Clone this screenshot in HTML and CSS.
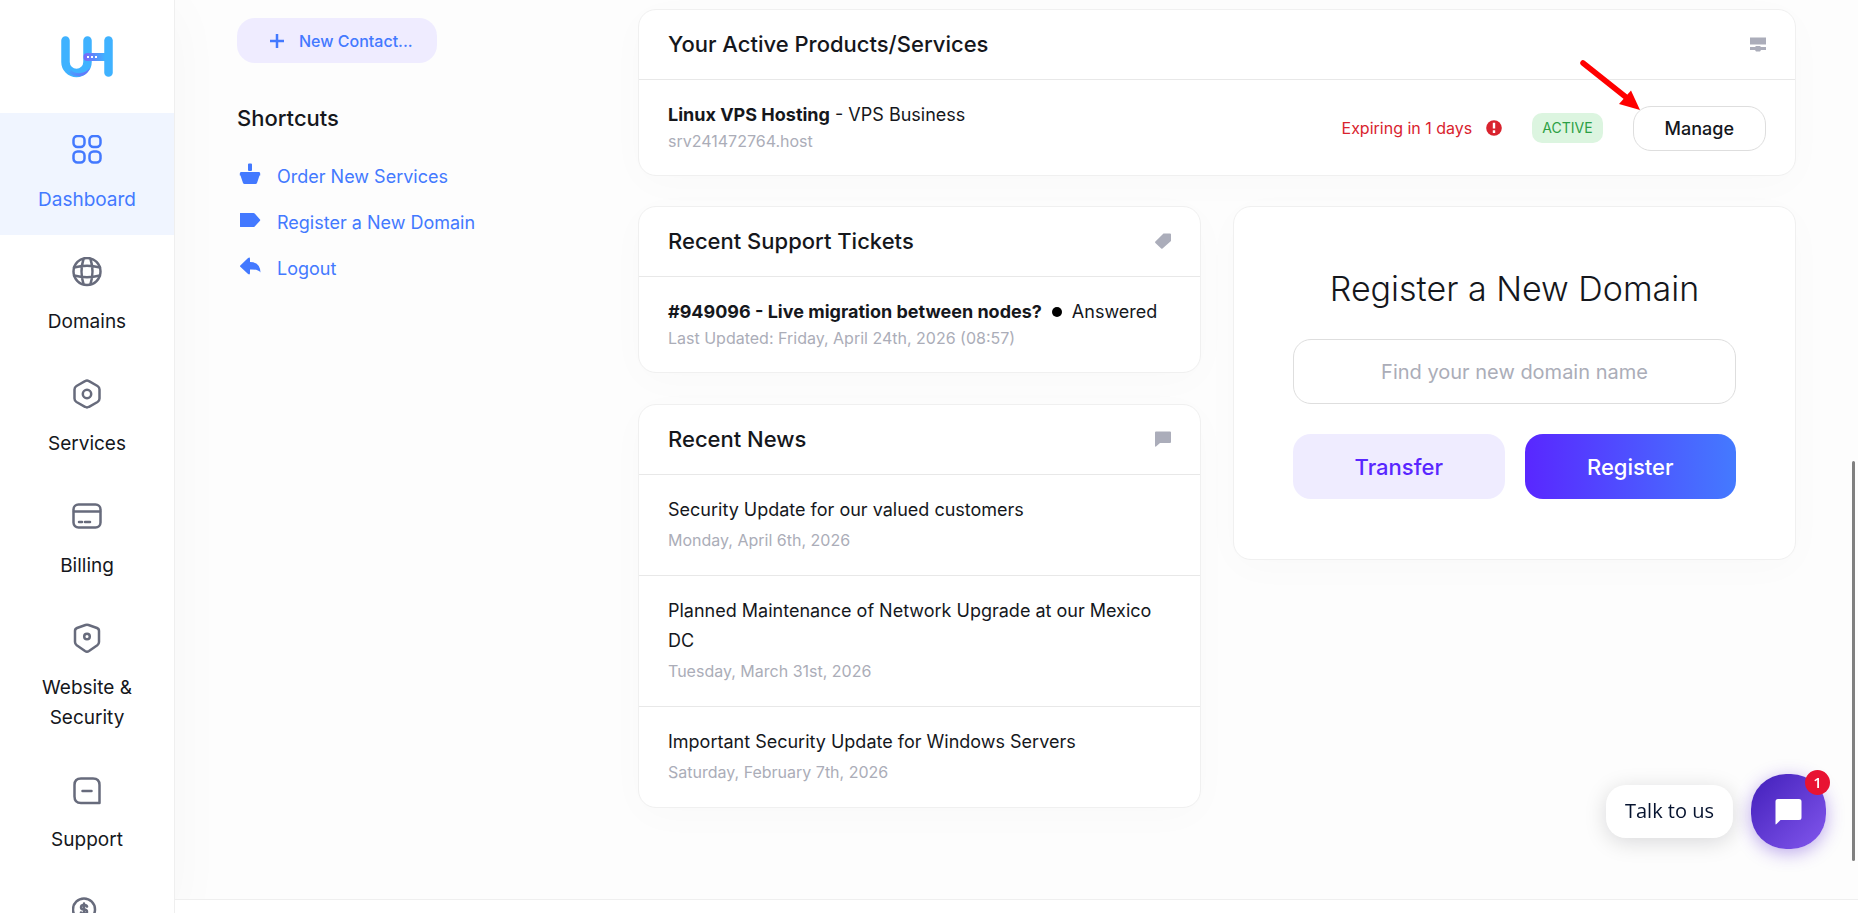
FILE: index.html
```html
<!DOCTYPE html>
<html lang="en">
<head>
    <meta charset="UTF-8">
    <meta name="viewport" content="width=device-width, initial-scale=1.0">
    <link rel="stylesheet" href="styles.css">
    <title>Dashboard</title>
</head>
<body>
    <div class="page">
        <nav class="sidebar">
            <a href="#" class="logo" aria-label="Home">
                <svg width="52" height="42" viewBox="0 0 52 42" fill="none" stroke-linecap="round">
                    <defs>
                        <linearGradient id="logoBar" x1="22" y1="0" x2="44" y2="0" gradientUnits="userSpaceOnUse">
                            <stop offset="0" stop-color="#7b61f8"/>
                            <stop offset="1" stop-color="#3fb2ff"/>
                        </linearGradient>
                        <linearGradient id="logoCurve" x1="6" y1="30" x2="27" y2="40" gradientUnits="userSpaceOnUse">
                            <stop offset="0" stop-color="#3fb2ff"/>
                            <stop offset="1" stop-color="#6b6bfa"/>
                        </linearGradient>
                    </defs>
                    <path d="M4.500 4.500V26A11 11 0 0 0 26.500 26V4.500" stroke="#3fb2ff" stroke-width="8.500"/>
                    <path d="M8 37C15 42 25 42 29 32C24 38 15 39 10 34Z" fill="url(#logoCurve)"/>
                    <path d="M47.500 4.500V36.500" stroke="#3fb2ff" stroke-width="8.500"/>
                    <path d="M26.500 21H45" stroke="url(#logoBar)" stroke-width="8"/>
                    <path d="M26 20h2v2h-2zM30 20h2v2h-2zM34 20h2v2h-2z" fill="#fff"/>
                </svg>
            </a>
            <a href="#" class="menu-link active">
                <svg class="menu-icon" viewBox="0 0 30 30">
                    <rect x="1.500" y="1" width="11" height="11" rx="4"/>
                    <rect x="17.500" y="1" width="11" height="11" rx="4"/>
                    <rect x="1.500" y="16.500" width="11" height="11" rx="4"/>
                    <rect x="17.500" y="16.500" width="11" height="11" rx="4"/>
                </svg>
                <span>Dashboard</span>
            </a>
            <a href="#" class="menu-link">
                <svg class="menu-icon" viewBox="0 0 30 30">
                    <circle cx="15" cy="14.500" r="13.500"/>
                    <path d="M11.500 2Q7.500 14.500 11.500 27M18.500 2Q22.500 14.500 18.500 27M2 10.500Q15 7 28 10.500M2 18.500Q15 22 28 18.500"/>
                </svg>
                <span>Domains</span>
            </a>
            <a href="#" class="menu-link">
                <svg class="menu-icon" viewBox="0 0 30 30">
                    <path d="M13 2.200Q15 1 17 2.200L25.500 7Q27.500 8.200 27.500 10.500V19.500Q27.500 21.800 25.500 23L17 27.800Q15 29 13 27.800L4.500 23Q2.500 21.800 2.500 19.500V10.500Q2.500 8.200 4.500 7Z"/>
                    <circle cx="15" cy="15" r="4.200"/>
                </svg>
                <span>Services</span>
            </a>
            <a href="#" class="menu-link">
                <svg class="menu-icon" viewBox="0 0 30 30">
                    <rect x="1.500" y="3.500" width="27" height="23" rx="5"/>
                    <path d="M2 10.500H28M7 21h3M13 21h5"/>
                </svg>
                <span>Billing</span>
            </a>
            <a href="#" class="menu-link">
                <svg class="menu-icon" viewBox="0 0 30 30">
                    <path d="M13.500 2Q15 1.500 16.500 2L25 5Q27 5.800 27 8V19Q27 21 25.300 22.300L17 28Q15 29.300 13 28L4.700 22.300Q3 21 3 19V8Q3 5.800 5 5Z"/>
                    <circle cx="15" cy="13.500" r="2.800"/>
                </svg>
                <span>Website &amp; Security</span>
            </a>
            <a href="#" class="menu-link">
                <svg class="menu-icon" viewBox="0 0 30 30">
                    <path d="M9 3.500H21Q27.500 3.500 27.500 10V28H9Q2.500 28 2.500 21.500V10Q2.500 3.500 9 3.500ZM10.500 16H19.500"/>
                </svg>
                <span>Support</span>
            </a>
            <a href="#" class="menu-link" aria-label="Affiliates">
                <svg class="menu-icon" viewBox="0 0 30 30">
                    <circle cx="12" cy="12.500" r="11"/>
                    <path d="M15 9.500Q14.500 8 12 8Q9 8 9 10.200Q9 12.500 12 12.500Q15 12.500 15 14.800Q15 17 12 17Q9.500 17 9 15.500M12 6.500V18.500M18 27Q26 26 27 18"/>
                </svg>
            </a>
        </nav>

        <main class="main">
            <div class="content">
                <aside class="side-panel">
                    <button class="new-contact">
                        <svg width="16" height="16" viewBox="0 0 16 16" fill="none" stroke="currentColor" stroke-width="2.500"><path d="M8 1V15M1 8H15"/></svg>
                        New Contact...
                    </button>
                    <h2 class="shortcuts-title">Shortcuts</h2>
                    <ul class="shortcuts">
                        <li><a href="#">
                            <svg width="24" height="24" viewBox="0 0 24 24" fill="currentColor"><path d="M10 2.500q0-1 1-1h2q1 0 1 1v5.500q0 1-1 1h-2q-1 0-1-1zM3 10h18q1.200 0 1.200 1.500v2h-.7L19 21q-.4 1-1.500 1h-11q-1 0-1.500-1L2.500 13.500h-.7v-2q0-1.500 1.200-1.500z"/></svg>
                            Order New Services
                        </a></li>
                        <li><a href="#">
                            <svg width="24" height="24" viewBox="0 0 24 24" fill="currentColor"><path d="M2 5h13.500q.7 0 1.200.5L22 11.500q.5.600 0 1.200L16.700 18.400q-.5.600-1.200.6H2.600q-.6 0-.6-.6z"/></svg>
                            Register a New Domain
                        </a></li>
                        <li><a href="#">
                            <svg width="24" height="24" viewBox="0 0 24 24" fill="currentColor"><path d="M2.300 11.500L9.800 4.300Q12 2.500 12 5V8Q22 8 22.500 18.500Q20 15 12 15.500V19Q12 21.500 9.800 19.800L2.300 12.800Q1.700 12.200 2.300 11.500z"/></svg>
                            Logout
                        </a></li>
                    </ul>
                </aside>

                <div class="cards">
                    <section class="card card-wide">
                        <header class="card-header">
                            <h3>Your Active Products/Services</h3>
                            <svg width="16" height="16" viewBox="0 0 16 16" fill="currentColor"><path d="M0 1.500h16v7H0zM0 11h5l1-1h4l1 1h5v3h-5l-1 1.500H6l-1-1.500H0z"/></svg>
                        </header>
                        <div class="product">
                            <div class="product-name">
                                <div><strong>Linux VPS Hosting</strong> - VPS Business</div>
                                <div class="muted">srv241472764.host</div>
                            </div>
                            <span class="expiring">Expiring in 1 days
                                <svg width="16" height="16" viewBox="0 0 16 16"><circle cx="8" cy="8" r="7.800" fill="#d9232e"/><path d="M6.800 2.800h2.400v5.700H6.800zM6.800 10.300h2.400v2.700H6.800z" fill="#fff"/></svg>
                            </span>
                            <span class="badge">ACTIVE</span>
                            <button class="manage">Manage</button>
                            <svg class="arrow" width="64" height="54" viewBox="0 0 64 54"><path d="M6 6L50 41" stroke="#f00" stroke-width="5.500" stroke-linecap="round"/><path d="M54 33.500L63 53L42 47z" fill="#f00"/></svg>
                        </div>
                    </section>

                    <div class="card-column">
                        <section class="card">
                            <header class="card-header">
                                <h3>Recent Support Tickets</h3>
                                <svg width="16" height="16" viewBox="0 0 16 16" fill="currentColor"><path d="M8.500.5H15q1 0 1 1V8L7.500 15.500q-.7.500-1.300 0L.4 10q-.7-.7 0-1.400z"/></svg>
                            </header>
                            <div class="ticket">
                                <div class="ticket-title"><strong>#949096 - Live migration between nodes?</strong> <i class="dot"></i> Answered</div>
                                <div class="muted">Last Updated: Friday, April 24th, 2026 (08:57)</div>
                            </div>
                        </section>

                        <section class="card">
                            <header class="card-header">
                                <h3>Recent News</h3>
                                <svg width="16" height="16" viewBox="0 0 16 16" fill="currentColor"><path d="M1 .5h14q1 0 1 1v9.500q0 1-1 1H5L1 15.500q-1 .5-1-.8V1.500q0-1 1-1z"/></svg>
                            </header>
                            <div class="news">
                                <a href="#">Security Update for our valued customers</a>
                                <div class="muted">Monday, April 6th, 2026</div>
                            </div>
                            <div class="news">
                                <a href="#">Planned Maintenance of Network Upgrade at our Mexico DC</a>
                                <div class="muted">Tuesday, March 31st, 2026</div>
                            </div>
                            <div class="news">
                                <a href="#">Important Security Update for Windows Servers</a>
                                <div class="muted">Saturday, February 7th, 2026</div>
                            </div>
                        </section>
                    </div>

                    <form class="card domain">
                        <h2><label for="domainName">Register a New Domain</label></h2>
                        <input id="domainName" type="text" placeholder="Find your new domain name">
                        <div class="domain-buttons">
                            <button type="button" class="transfer">Transfer</button>
                            <button type="button" class="register">Register</button>
                        </div>
                    </form>
                </div>
            </div>
            <footer class="footer"></footer>
        </main>
    </div>

    <!-- chat widget stays on top of the page -->
    <div class="chat">
        <span class="chat-label">Talk to us</span>
        <button class="chat-button" aria-label="Open chat">
            <svg width="27" height="26" viewBox="0 0 27 26" fill="#fff"><path d="M3 0h21q2.500 0 2.500 2.500v16q0 2.500-2.500 2.500H5.500L1.500 25Q.5 26 .5 24.500V2.500Q.5 0 3 0z"/></svg>
            <span class="chat-count">1</span>
        </button>
    </div>
    <div class="scroll-thumb"></div>
</body>
</html>
```
FILE: styles.css
```css
* {
    box-sizing: border-box;
}
body {
    margin: 0;
    background-color: #fdfdfd;
    color: #15171c;
    font-family: Inter, sans-serif;
    font-size: 18px;
    line-height: 30px;
}
h2, h3, ul {
    margin: 0;
    padding: 0;
}
h2, h3 {
    font-weight: 500;
}
a {
    color: inherit;
    text-decoration: none;
}
button, input {
    font-family: inherit;
    font-weight: 500;
    border: none;
    border-radius: 18px;
}
svg {
    display: block;
    flex-shrink: 0;
}
strong {
    font-weight: 700;
}
.page {
    display: flex;
    height: 100vh;
    overflow: hidden;
}

/* left menu */
.sidebar {
    flex: 0 0 175px;
    background-color: #fff;
    border-right: 1px solid #efefef;
    box-shadow: 0 8px 60px rgba(0, 0, 0, 0.03);
}
.logo {
    display: flex;
    justify-content: center;
    height: 113px;
    padding-top: 36px;
}
.menu-link {
    display: flex;
    flex-direction: column;
    align-items: center;
    gap: 20px;
    min-height: 122px;
    padding: 22px 30px 20px;
    font-size: 19px;
    text-align: center;
}
.menu-link.active {
    background-color: #f0f5ff;
    color: #4379ff;
}
.menu-icon {
    width: 30px;
    height: 30px;
    fill: none;
    stroke: #676b7c;
    stroke-width: 2.5px;
    stroke-linecap: round;
    stroke-linejoin: round;
}
.active .menu-icon {
    stroke: #4379ff;
}

.main {
    flex: 1;
    display: flex;
    flex-direction: column;
    min-width: 0;
}
.content {
    flex: 1;
    display: grid;
    grid-template-columns: 369px 1fr;
    gap: 32px;
    padding: 9px 62px 0;
}
.footer {
    height: 14px;
    background-color: #fff;
    border-top: 1px solid #efefef;
}

/* shortcuts */
.side-panel {
    padding-top: 9px;
}
.new-contact {
    display: flex;
    align-items: center;
    gap: 14px;
    height: 45px;
    padding: 0 24px 0 32px;
    background-color: #efecff;
    color: #4379ff;
    font-size: 16px;
}
.shortcuts-title {
    margin: 40px 0 29px;
    font-size: 22px;
}
.shortcuts {
    display: flex;
    flex-direction: column;
    gap: 16px;
    list-style: none;
    color: #4379ff;
}
.shortcuts a {
    display: flex;
    gap: 15px;
    padding-left: 1px;
}

/* cards */
.cards {
    display: grid;
    grid-template-columns: 1fr 1fr;
    align-items: start;
    align-content: start;
    gap: 30px 32px;
}
.card-wide {
    grid-column: 1 / 3;
}
.card-column {
    display: grid;
    gap: 31px;
}
.card {
    background-color: #fff;
    border: 1px solid #f0f0f0;
    border-radius: 18px;
    box-shadow: 0 8px 40px rgba(0, 0, 0, 0.02);
}
.card-header {
    display: flex;
    justify-content: space-between;
    align-items: center;
    height: 69px;
    padding: 0 29px 2px;
    color: #abadba;
}
.card-header h3 {
    color: #15171c;
    font-size: 22px;
}
.muted {
    color: #abadb8;
    font-size: 16px;
}
.product, .ticket {
    border-top: 1px solid #e8e8e8;
    padding: 21px 29px 20px;
    line-height: 27px;
}
.product {
    position: relative;
    display: flex;
    align-items: center;
    gap: 30px;
}
.product-name {
    flex: 1;
}
.expiring {
    display: flex;
    align-items: center;
    gap: 14px;
    color: #d9232e;
    font-size: 16px;
}
.badge {
    padding: 0 10px;
    border-radius: 10px;
    background-color: #dcf5e0;
    color: #2c9f45;
    font-size: 14px;
    line-height: 30px;
}
.manage {
    height: 45px;
    padding: 0 31px;
    background-color: #fff;
    border: 1px solid #dedede;
    color: #15171c;
    font-size: 18px;
}
.arrow {
    position: absolute;
    right: 154px;
    top: -23px;
}
.ticket-title {
    display: flex;
    align-items: center;
    gap: 10px;
    white-space: nowrap;
}
.dot {
    width: 10px;
    height: 10px;
    border-radius: 50%;
    background-color: #000;
}
.news {
    border-top: 1px solid #e8e8e8;
    padding: 20px 29px;
}

/* domain search */
.domain {
    padding: 60px 59px;
    text-align: center;
}
.domain h2 {
    margin-bottom: 28px;
    font-size: 34px;
    font-weight: 300;
    line-height: 44px;
}
.domain input {
    display: block;
    width: 100%;
    height: 65px;
    margin-bottom: 30px;
    border: 1px solid #dedede;
    font-size: 20px;
    font-weight: 400;
    text-align: center;
}
.domain input::placeholder {
    color: #abadb8;
}
.domain-buttons {
    display: grid;
    grid-template-columns: 1fr 1fr;
    gap: 20px;
}
.domain-buttons button {
    height: 65px;
    font-size: 22px;
}
.transfer {
    background-color: #efecff;
    color: #5927ff;
}
.register {
    background: linear-gradient(90deg, #5927ff, #447aff);
    color: #fff;
}

/* chat */
.chat {
    position: fixed;
    right: 32px;
    bottom: 64px;
    display: flex;
    align-items: center;
    gap: 18px;
}
.chat-label {
    padding: 11px 19px 12px;
    border-radius: 20px;
    background-color: #fff;
    box-shadow: 0 4px 22px rgba(0, 10, 20, 0.15);
    color: #06132f;
    font-family: "Open Sans", sans-serif;
    font-size: 20px;
}
.chat-button {
    position: relative;
    display: flex;
    align-items: center;
    justify-content: center;
    width: 75px;
    height: 75px;
    padding: 0;
    border-radius: 35px;
    background: linear-gradient(135deg, #421fba, #8257ed);
    box-shadow: 0 4px 18px rgba(89, 39, 210, 0.4);
}
.chat-count {
    position: absolute;
    top: -4px;
    right: -4px;
    width: 25px;
    height: 25px;
    border-radius: 50%;
    background-color: #e81332;
    color: #fff;
    font-family: "Open Sans", sans-serif;
    font-size: 15px;
    font-weight: 600;
    line-height: 25px;
}
.scroll-thumb {
    position: fixed;
    right: 3px;
    bottom: 52px;
    width: 3px;
    height: 400px;
    border-radius: 2px;
    background-color: #808080;
}
```
